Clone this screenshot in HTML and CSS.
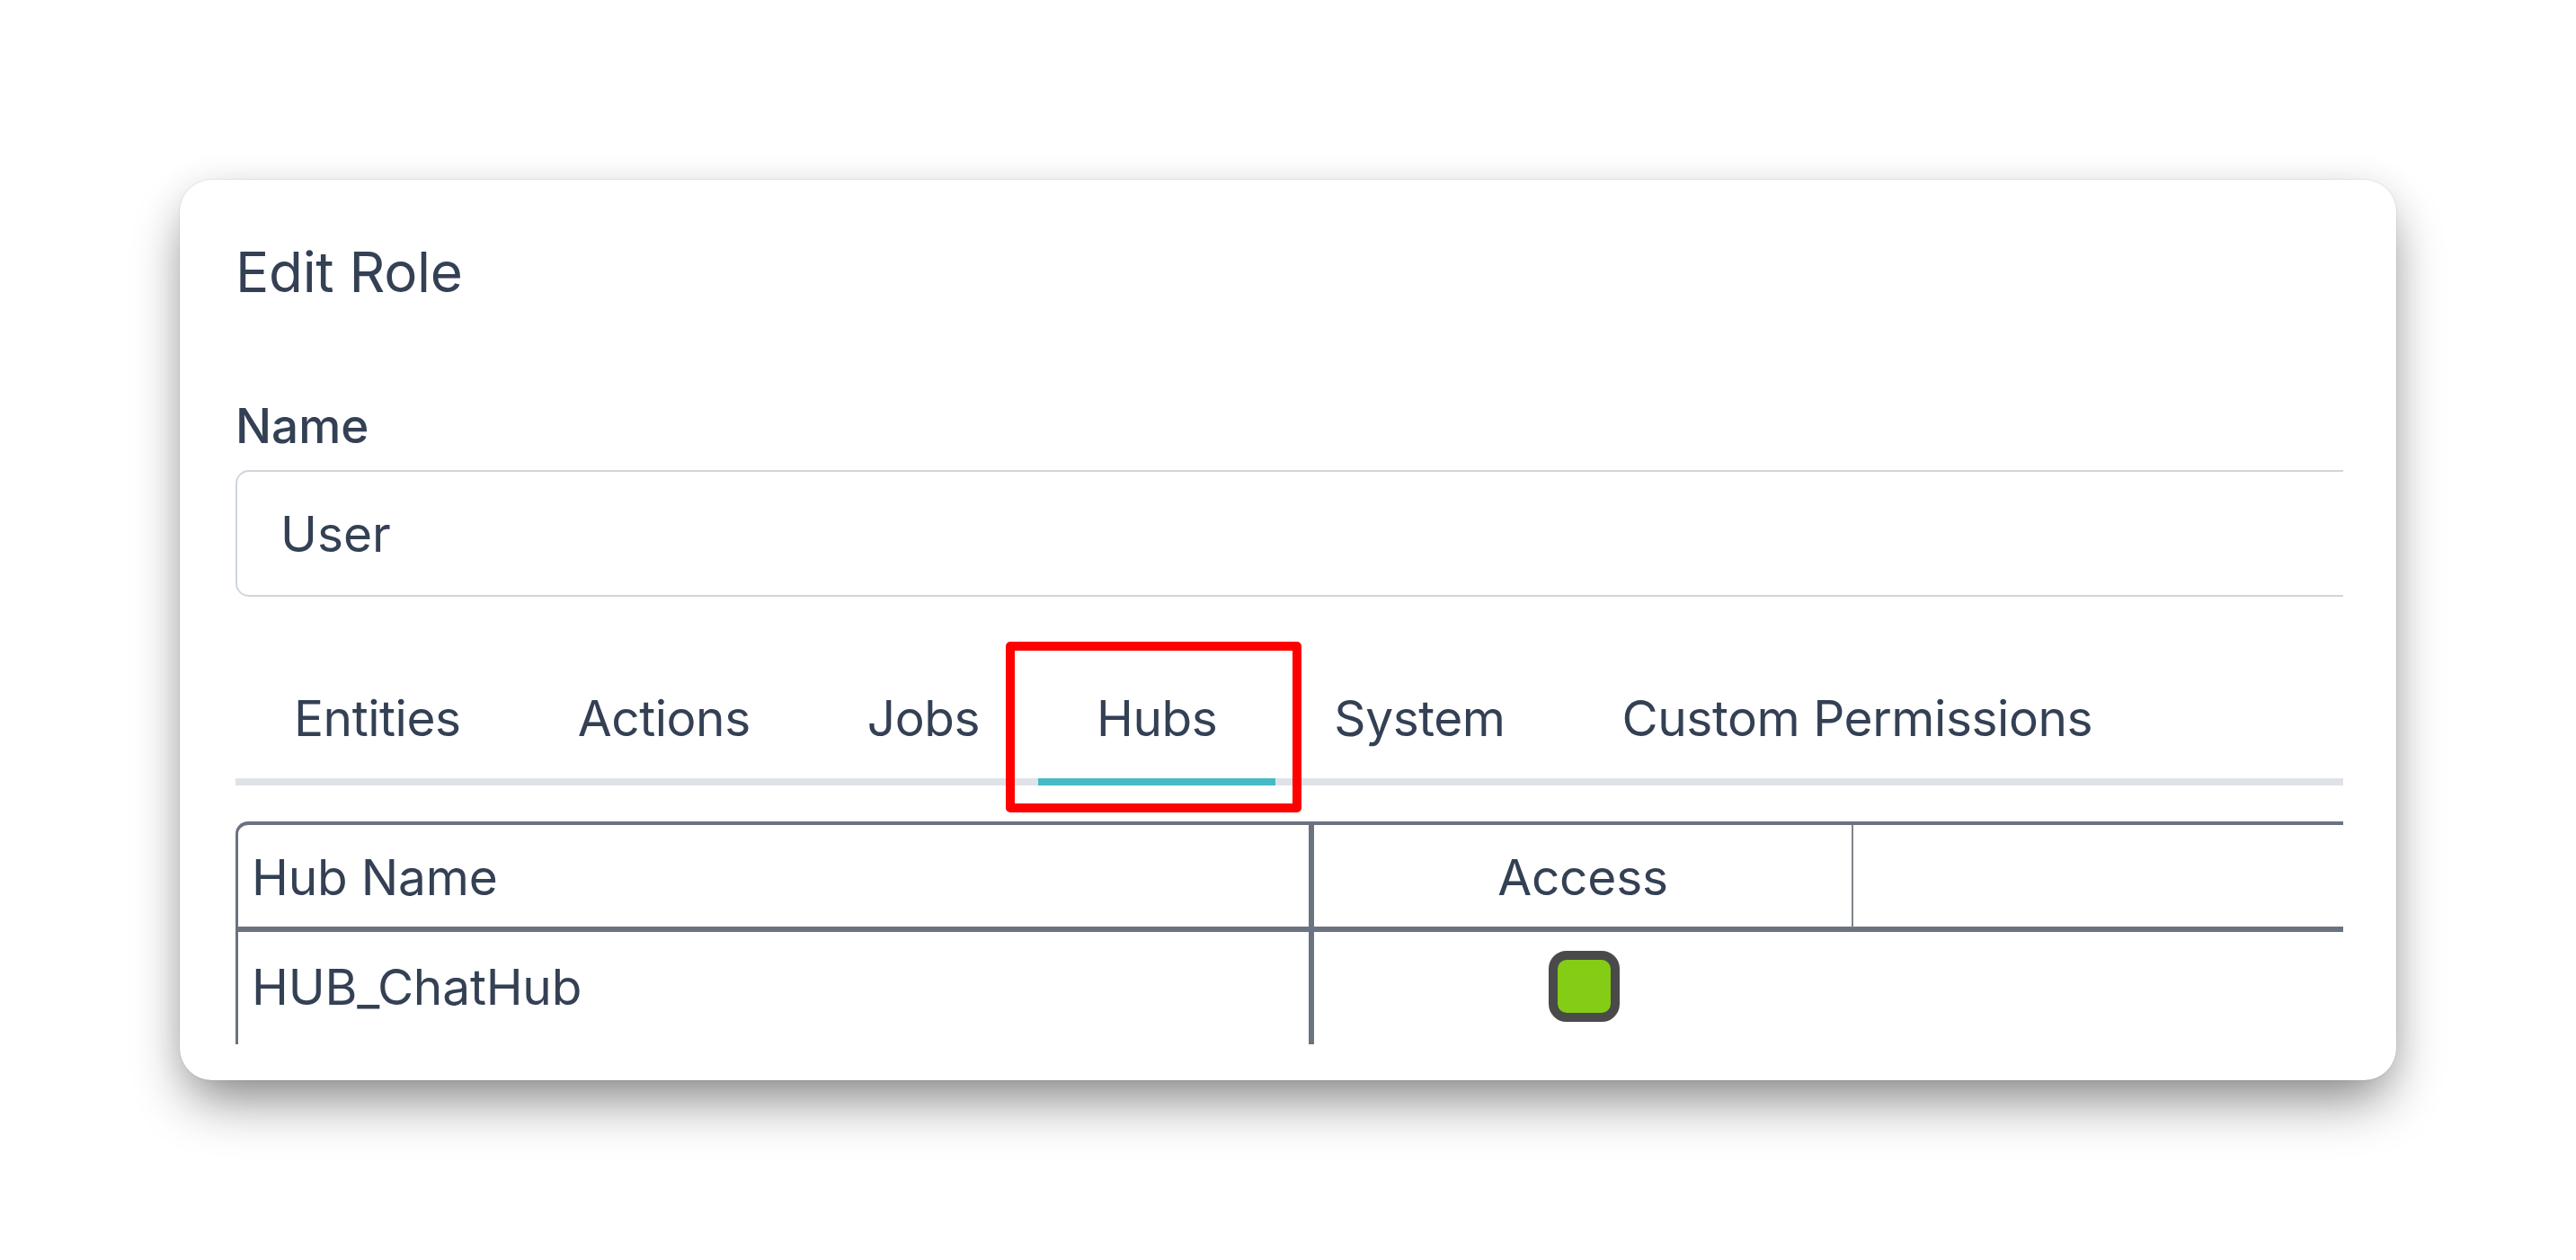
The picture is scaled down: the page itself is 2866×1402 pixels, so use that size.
FILE: index.html
```html
<!DOCTYPE html>
<html lang="en">
<head>
<meta charset="utf-8">
<title>Edit Role</title>
<link rel="stylesheet" href="styles.css">
</head>
<body>
<div class="page">
  <div class="card">
    <div class="card-body">
      <h1 class="title">Edit Role</h1>
      <label class="label" for="name">Name</label>
      <div class="input-wrap">
        <div class="input" id="name">User</div>
      </div>
      <nav class="tabs">
        <div class="tab">Entities</div>
        <div class="tab">Actions</div>
        <div class="tab">Jobs</div>
        <div class="tab active">Hubs</div>
        <div class="tab">System</div>
        <div class="tab">Custom Permissions</div>
      </nav>
      <div class="grid">
        <div class="cell head c1">Hub Name</div>
        <div class="cell head c2">Access</div>
        <div class="cell head c3"></div>
        <div class="cell body c1">HUB_ChatHub</div>
        <div class="cell body c2"><span class="check"></span></div>
        <div class="cell body c3"></div>
      </div>
    </div>
  </div>
  <div class="highlight"></div>
</div>
</body>
</html>
```

FILE: styles.css
```css
* { box-sizing: border-box; }
html, body { margin: 0; padding: 0; background: #ffffff; }
body {
  font-family: Inter, "Noto Sans", "Liberation Sans", sans-serif;
  color: #344054;
}
.page {
  position: relative;
  width: 2866px;
  height: 1402px;
  padding: 200px;
}
.card {
  height: 1002px;
  background: #ffffff;
  border-radius: 36px;
  padding: 66px 59px 40px 62px;
  box-shadow: 0 0 0 1px rgba(0,0,0,0.05), 0 30px 60px -10px rgba(0,0,0,0.48), 0 0 40px rgba(0,0,0,0.06);
  display: flex;
  flex-direction: column;
}
.card-body {
  flex: 1;
  overflow: hidden;
  display: flex;
  flex-direction: column;
}
.title {
  margin: 0;
  font-size: 62px;
  line-height: 74px;
  font-weight: 400;
  letter-spacing: -0.3px;
}
.label {
  display: block;
  margin-top: 102px;
  font-size: 53px;
  line-height: 64px;
  font-weight: 500;
}
.input-wrap { margin-top: 17px; }
.input {
  width: calc(100% + 60px);
  height: 141px;
  border: 2.5px solid #d0d5dc;
  border-radius: 15px;
  padding: 0 48px;
  display: flex;
  align-items: center;
  font-size: 55px;
  line-height: 66px;
}
.tabs {
  margin-top: 68px;
  display: flex;
  border-bottom: 8px solid #dfe3e8;
}
.tab {
  padding: 34px 65px;
  font-size: 55px;
  line-height: 66px;
  letter-spacing: -0.45px;
  border-bottom: 8px solid transparent;
  margin-bottom: -8px;
  white-space: nowrap;
}
.tab.active { border-bottom-color: #46b9c9; }
.grid {
  margin-top: 40px;
  display: grid;
  grid-template-columns: 1194px 603px 800px;
  width: max-content;
  border-top: 4px solid #6b7280;
  border-left: 3px solid #6b7280;
  border-top-left-radius: 14px;
}
.cell {
  font-size: 55px;
  line-height: 66px;
  white-space: nowrap;
  letter-spacing: -0.2px;
}
.head { padding: 25px 15px 22px; border-bottom: 3px solid #6b7280; }
.body { padding: 28px 15px 60px; border-top: 3px solid #6b7280; }
.c1 { border-right: 3px solid #6b7280; }
.c2 { border-left: 3px solid #6b7280; text-align: center; }
.head.c2 { border-right: 2px solid #808489; }
.body.c2 { display: flex; justify-content: center; align-items: flex-start; padding-top: 21px; }
.check {
  display: block;
  width: 79px;
  height: 79px;
  border: 10px solid #4a4a4a;
  border-radius: 20px;
  background: #84cc16;
}
.highlight {
  position: absolute;
  left: 1119px;
  top: 714px;
  width: 329px;
  height: 190px;
  border: 10px solid #ff0000;
  border-radius: 5px;
}
```
